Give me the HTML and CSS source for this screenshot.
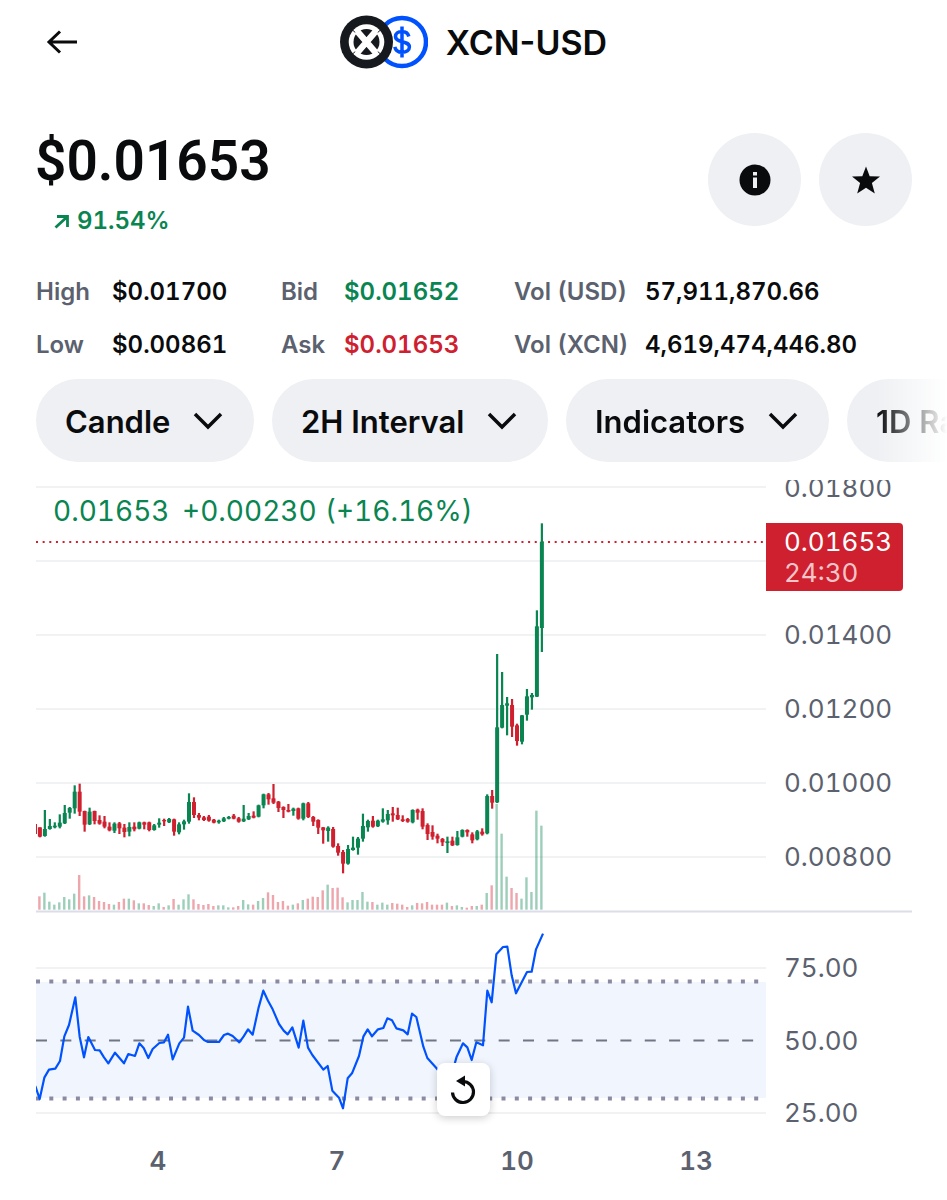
FILE: index.html
```html
<!DOCTYPE html>
<html lang="en">
<head>
  <meta charset="UTF-8" />
  <title>XCN-USD</title>
  <meta name="viewport" content="width=device-width, initial-scale=1" />
  <link rel="stylesheet" href="styles.css">
</head>
<body>
  <header class="top-bar">
    <button class="back-btn" aria-label="Back">
      <svg width="32" height="28" viewBox="0 0 32 28"><path d="M14 3.500L3 14l11 10.500M3 14h28" /></svg>
    </button>
    <div class="pair">
      <svg width="88" height="54" viewBox="0 0 88 54" aria-hidden="true">
        <circle cx="62" cy="27" r="24" fill="#fff" stroke="#0052ff" stroke-width="4.500" />
        <path d="M68.800 21.500c-.8-3.200-3.100-5-6.800-5-4 0-6.500 2-6.500 5 0 7 13.900 3.400 13.900 10.600 0 3.300-2.900 5.200-7.100 5.200s-6.900-2-7.500-5.400M62 11.500v31" fill="none" stroke="#0052ff" stroke-width="3.500" />
        <circle cx="26.500" cy="27" r="26.500" fill="#16191e" />
        <circle cx="26.500" cy="27" r="17.800" fill="#fff" />
        <circle cx="26.500" cy="27" r="13" fill="#16191e" />
        <path d="M12.500 15l5 4.500M40.500 15l-5 4.500M12.500 39l5-4.500M40.500 39l-5-4.500" stroke="#16191e" stroke-width="1" />
        <path d="M17 16l19 22M36 16l-19 22" stroke="#fff" stroke-width="6.500" />
      </svg>
      <h1>XCN-USD</h1>
    </div>
  </header>

  <section class="summary">
    <div>
      <div class="price">$0.01653</div>
      <div class="change">
        <svg width="16" height="16" viewBox="0 0 16 16" aria-hidden="true"><path d="M1.500 14.500L13 4M3 3.500h10.500V14" /></svg>
        91.54%
      </div>
    </div>
    <div class="actions">
      <button class="round-btn" aria-label="Info">
        <svg width="32" height="32" viewBox="0 0 32 32">
          <circle cx="16" cy="16" r="15.500" fill="#0a0b0d" />
          <path d="M14 8h4v3.500h-4zM14 13.500h4V24h-4z" fill="#eef0f3" />
        </svg>
      </button>
      <button class="round-btn" aria-label="Favorite">
        <svg width="30" height="30" viewBox="0 0 30 30"><path d="M15 1.500l3.700 9.700 10.300.4-8.100 6.500 2.900 10.400L15 22.700 6.200 28.500l2.900-10.400L1 11.600l10.300-.4z" fill="#0a0b0d" /></svg>
      </button>
    </div>
  </section>

  <dl class="stats">
    <dt>High</dt><dd>$0.01700</dd>
    <dt>Bid</dt><dd class="up">$0.01652</dd>
    <dt>Vol (USD)</dt><dd>57,911,870.66</dd>
    <dt>Low</dt><dd>$0.00861</dd>
    <dt>Ask</dt><dd class="down">$0.01653</dd>
    <dt>Vol (XCN)</dt><dd>4,619,474,446.80</dd>
  </dl>

  <div class="filters">
    <div class="pill">
      <select aria-label="Chart type"><option>Candle</option></select>
      <svg width="30" height="20" viewBox="0 0 30 20"><path d="M2 3l13 13L28 3" /></svg>
    </div>
    <div class="pill">
      <select aria-label="Interval"><option>2H Interval</option></select>
      <svg width="30" height="20" viewBox="0 0 30 20"><path d="M2 3l13 13L28 3" /></svg>
    </div>
    <div class="pill">
      <select aria-label="Indicators"><option>Indicators</option></select>
      <svg width="30" height="20" viewBox="0 0 30 20"><path d="M2 3l13 13L28 3" /></svg>
    </div>
    <div class="pill">
      <select aria-label="Range"><option>1D Range</option></select>
      <svg width="30" height="20" viewBox="0 0 30 20"><path d="M2 3l13 13L28 3" /></svg>
    </div>
  </div>

  <main class="chart">
    <svg class="plot" viewBox="0 0 911 720" role="img" aria-label="XCN-USD candles, volume and RSI">
      <rect class="band" x="0" y="502" width="730" height="116" />
      <g class="grid">
        <path d="M0 7h730M0 81h730M0 155h730M0 229h730M0 303h730M0 377h730M0 488h730M0 633h730" />
      </g>
      <path class="divider" d="M0 431.500h876" />

      <path class="limit" d="M0 501.500h730M0 618.500h730" />
      <path class="middle" d="M0 560.500h730" />

      <g id="volume"></g>
      <path class="last-price" d="M0 62h730" />
      <g id="candles"></g>
      <polyline id="rsi" />

      <g class="legend">
        <text x="17" y="41">0.01653</text>
        <text x="146" y="41">+0.00230</text>
        <text x="289" y="41">(+16.16%)</text>
      </g>

      <g class="axis">
        <text x="748" y="17">0.01800</text>
        <text x="748" y="164">0.01400</text>
        <text x="748" y="238">0.01200</text>
        <text x="748" y="312">0.01000</text>
        <text x="748" y="386">0.00800</text>
        <text x="748" y="497">75.00</text>
        <text x="748" y="570">50.00</text>
        <text x="748" y="642">25.00</text>
      </g>

      <path class="tag" d="M730 43h133a4 4 0 0 1 4 4v60a4 4 0 0 1-4 4H730z" />
      <text class="tag-price" x="748" y="71">0.01653</text>
      <text class="tag-time" x="748" y="102">24:30</text>

      <g class="days">
        <text x="122" y="690">4</text>
        <text x="301" y="690">7</text>
        <text x="481" y="690">10</text>
        <text x="660" y="690">13</text>
      </g>
    </svg>
    <button class="reset-btn" aria-label="Reset chart">
      <svg width="30" height="32" viewBox="0 0 30 32">
        <path d="M4.500 18.500A10.500 10.500 0 1 0 15 7.500h-3" fill="none" stroke="#0a0b0d" stroke-width="3.200" />
        <path d="M17 1.500v11L8 7z" fill="#0a0b0d" />
      </svg>
    </button>
  </main>

  <script src="chart.js"></script>
</body>
</html>
```
FILE: styles.css
```css
body {
  margin: 0;
  font-family: Inter, "Liberation Sans", sans-serif;
  background-color: #fff;
  color: #0a0b0d;
  overflow-x: hidden;
}

button {
  padding: 0;
  border: none;
  cursor: pointer;
}

svg {
  display: block;
}

.top-bar {
  display: grid;
  grid-template-columns: 1fr auto 1fr;
  align-items: center;
  height: 84px;
  padding: 0 46px;
}

.back-btn {
  justify-self: start;
  background: none;
}

.back-btn path {
  fill: none;
  stroke: #0a0b0d;
  stroke-width: 3;
}

.pair {
  display: flex;
  align-items: center;
  gap: 18px;
}

h1 {
  margin: 0;
  padding-top: 2px;
  font-size: 34px;
  line-height: 40px;
  font-weight: 600;
}

.summary {
  display: flex;
  justify-content: space-between;
  margin: 45px 35px 0;
}

.price {
  font-family: Roboto, "Liberation Sans", sans-serif;
  font-size: 55px;
  line-height: 64px;
  font-weight: 600;
}

.change {
  display: flex;
  align-items: center;
  gap: 7px;
  margin: 12px 0 0 19px;
  font-size: 24px;
  line-height: 32px;
  font-weight: 600;
  font-variant-numeric: tabular-nums;
  color: #098551;
}

.change path {
  fill: none;
  stroke: #098551;
  stroke-width: 2.8;
}

.actions {
  display: flex;
  gap: 18px;
  padding-top: 4px;
}

.round-btn {
  display: grid;
  place-items: center;
  width: 93px;
  height: 93px;
  border-radius: 50%;
  background-color: #eef0f3;
}

.stats {
  display: grid;
  grid-template-columns: 76px 169px 63px 170px 131px auto;
  row-gap: 21px;
  margin: 39px 0 0 36px;
  font-size: 24px;
  line-height: 32px;
  font-variant-numeric: tabular-nums;
  white-space: nowrap;
}

.stats dt {
  font-weight: 600;
  color: #5b616e;
}

.stats dd {
  margin: 0;
  font-weight: 600;
}

.stats .up {
  color: #098551;
}

.stats .down {
  color: #cf202f;
}

.filters {
  display: flex;
  gap: 18px;
  margin-top: 18px;
  padding-left: 36px;
  overflow: hidden;
  -webkit-mask-image: linear-gradient(to right, #000 calc(100% - 70px), transparent);
  mask-image: linear-gradient(to right, #000 calc(100% - 70px), transparent);
}

.pill {
  position: relative;
  flex: none;
}

.pill select {
  appearance: none;
  height: 83px;
  padding: 2px 83px 0 29px;
  border: none;
  border-radius: 42px;
  background-color: #eef0f3;
  color: #0a0b0d;
  font-family: inherit;
  font-size: 31px;
  font-weight: 600;
}

.pill svg {
  position: absolute;
  right: 31px;
  top: 32px;
  pointer-events: none;
}

.pill path {
  fill: none;
  stroke: #0a0b0d;
  stroke-width: 3.5;
}

.chart {
  position: relative;
  margin: 18px 0 0 36px;
}

.plot {
  width: 100%;
  height: auto;
  font-variant-numeric: tabular-nums;
}

.grid path {
  stroke: #f1f2f4;
  stroke-width: 2;
}

.divider {
  stroke: #dcdde8;
  stroke-width: 2;
}

.band {
  fill: #f1f6fe;
}

.limit {
  stroke: #8a8ba3;
  stroke-width: 4;
  stroke-dasharray: 4 9.3;
}

.middle {
  stroke: #717684;
  stroke-width: 2;
  stroke-dasharray: 11 13.35;
}

.last-price {
  stroke: #cf202f;
  stroke-width: 2;
  stroke-dasharray: 2 4.65;
}

#rsi {
  fill: none;
  stroke: #0052ff;
  stroke-width: 2.2;
  stroke-linejoin: round;
}

.up-bar {
  fill: #098551;
}

.down-bar {
  fill: #cf202f;
}

#volume rect {
  opacity: 0.4;
}

.legend {
  fill: #098551;
  font-size: 28px;
}

.axis,
.tag-price,
.tag-time {
  font-size: 26px;
}

.axis,
.days {
  fill: #5b616e;
}

.tag {
  fill: #cf202f;
}

.tag-price {
  fill: #fff;
}

.tag-time {
  fill: #f5c6c9;
}

.days {
  font-size: 26px;
  font-weight: 600;
  text-anchor: middle;
}

.reset-btn {
  position: absolute;
  left: 44%;
  top: 81%;
  display: grid;
  place-items: center;
  width: 53px;
  height: 53px;
  border-radius: 8px;
  background-color: #fff;
  box-shadow: 0 2px 8px rgba(0, 0, 0, 0.2);
}
```
FILE: chart.js
```js
const SVG_NS = "http://www.w3.org/2000/svg";
const STEP = 4.97;
const FIRST_X = 3.4;
const VOLUME_BASE = 419;

// high, body top, body bottom, low, volume top, direction
// three data units make one unit of the plot
const candles = [
  [172, 172, 200, 202, 379, "r"], [120, 177, 198, 200, 368, "g"], [147, 168, 177, 179, 395, "g"],
  [157, 167, 172, 175, 404, "g"], [133, 158, 170, 175, 397, "g"], [105, 129, 160, 162, 381, "g"],
  [111, 114, 128, 146, 388, "g"], [46, 65, 115, 131, 371, "g"], [41, 65, 125, 138, 315, "r"],
  [122, 123, 164, 185, 379, "r"], [113, 125, 163, 165, 376, "g"], [122, 123, 153, 163, 381, "r"],
  [136, 150, 161, 164, 393, "r"], [138, 155, 170, 175, 396, "r"], [157, 170, 181, 184, 402, "r"],
  [157, 161, 182, 189, 404, "g"], [156, 160, 175, 192, 396, "r"], [162, 173, 186, 202, 386, "r"],
  [157, 171, 185, 199, 386, "g"], [157, 170, 178, 184, 391, "r"], [155, 157, 176, 178, 400, "g"],
  [155, 157, 164, 178, 400, "r"], [155, 157, 180, 184, 405, "r"], [162, 166, 180, 182, 408, "g"],
  [145, 158, 164, 173, 400, "g"], [146, 150, 154, 168, 411, "r"], [144, 147, 157, 159, 406, "g"],
  [146, 148, 185, 197, 387, "r"], [157, 163, 187, 193, 404, "g"], [149, 154, 163, 179, 388, "g"],
  [70, 96, 155, 161, 373, "g"], [82, 96, 135, 144, 388, "r"], [129, 135, 143, 151, 402, "r"],
  [138, 142, 150, 153, 405, "r"], [135, 140, 152, 155, 402, "r"], [147, 149, 158, 160, 408, "r"],
  [149, 152, 157, 161, 406, "g"], [141, 145, 154, 156, 406, "g"], [138, 141, 146, 148, 412, "g"],
  [132, 137, 146, 148, 412, "r"], [141, 145, 155, 158, 408, "r"], [105, 146, 154, 156, 390, "g"],
  [129, 138, 148, 150, 403, "g"], [124, 137, 143, 145, 404, "r"], [104, 106, 140, 142, 393, "g"],
  [71, 73, 106, 115, 384, "g"], [69, 73, 88, 104, 367, "r"], [42, 85, 98, 102, 375, "r"],
  [93, 95, 114, 126, 396, "r"], [109, 111, 120, 144, 393, "r"], [102, 120, 125, 127, 407, "r"],
  [113, 116, 123, 137, 404, "g"], [113, 115, 146, 149, 400, "r"], [98, 100, 146, 151, 390, "g"],
  [96, 100, 141, 144, 386, "r"], [138, 141, 155, 168, 380, "r"], [148, 150, 173, 192, 381, "r"],
  [171, 172, 181, 221, 361, "r"], [169, 173, 183, 215, 344, "g"], [171, 177, 230, 233, 354, "r"],
  [220, 228, 248, 257, 353, "r"], [240, 246, 281, 310, 382, "r"], [225, 237, 281, 284, 397, "g"],
  [200, 233, 240, 242, 390, "g"], [201, 206, 233, 254, 390, "g"], [131, 168, 206, 215, 366, "g"],
  [149, 153, 172, 185, 395, "g"], [138, 152, 170, 173, 396, "r"], [149, 152, 169, 171, 404, "g"],
  [115, 148, 155, 158, 398, "g"], [120, 132, 151, 164, 404, "g"], [111, 130, 136, 155, 399, "r"],
  [113, 135, 148, 150, 401, "r"], [136, 148, 153, 156, 404, "r"], [144, 147, 155, 158, 411, "r"],
  [118, 120, 157, 160, 406, "g"], [116, 119, 128, 149, 399, "r"], [115, 123, 170, 178, 400, "r"],
  [160, 165, 192, 210, 396, "r"], [166, 186, 200, 209, 404, "r"], [191, 197, 206, 220, 404, "r"],
  [204, 207, 217, 228, 404, "r"], [200, 214, 219, 249, 398, "g"], [200, 212, 226, 228, 408, "r"],
  [183, 202, 225, 227, 406, "g"], [178, 180, 200, 202, 411, "g"], [178, 180, 187, 200, 413, "r"],
  [187, 193, 211, 220, 408, "r"], [180, 184, 208, 211, 408, "g"], [175, 185, 193, 197, 404, "r"],
  [73, 78, 190, 193, 369, "g"], [60, 78, 98, 116, 346, "r"], [-348, -128, 97, 99, 102, "g"],
  [-294, -195, -127, -125, 191, "g"], [-219, -200, -193, -104, 320, "g"], [-213, -195, -130, -99, 354, "r"],
  [-139, -134, -87, -73, 369, "r"], [-165, -164, -85, -77, 386, "g"], [-243, -221, -166, -148, 322, "g"],
  [-231, -225, -218, -181, 366, "g"], [-479, -431, -220, -219, 122, "g"], [-740, -685, -426, -354, 167, "g"]
];

const rsi = [
  [16, 498], [29, 537], [43, 473], [57, 449], [76, 446], [90, 423], [103, 349], [117, 315], [136, 232],
  [149, 350], [162, 412], [175, 351], [195, 390], [209, 391], [222, 412], [235, 430], [255, 398],
  [282, 430], [295, 402], [315, 408], [328, 370], [341, 384], [355, 414], [368, 387], [388, 369],
  [402, 367], [414, 344], [428, 418], [448, 370], [462, 353], [474, 260], [488, 332], [507, 345],
  [522, 360], [534, 366], [567, 366], [582, 345], [594, 341], [608, 348], [628, 367], [641, 349],
  [654, 328], [668, 344], [686, 262], [700, 212], [714, 242], [728, 268], [747, 312], [761, 332],
  [773, 343], [787, 322], [806, 383], [820, 302], [834, 383], [847, 405], [880, 449], [893, 438],
  [907, 512], [927, 533], [939, 565], [953, 475], [966, 460], [987, 408], [1000, 350], [1013, 328],
  [1026, 349], [1044, 328], [1060, 324], [1072, 295], [1086, 301], [1099, 325], [1120, 331],
  [1133, 343], [1146, 281], [1159, 291], [1180, 380], [1192, 414], [1219, 444], [1240, 470],
  [1258, 475], [1275, 428], [1280, 410], [1299, 370], [1312, 382], [1325, 420], [1339, 367],
  [1359, 376], [1372, 212], [1385, 247], [1399, 103], [1419, 81], [1432, 80], [1445, 166],
  [1458, 220], [1491, 156], [1505, 155], [1518, 88], [1539, 41]
];

function addBar(parent, x, width, top, bottom, dir) {
  const rect = document.createElementNS(SVG_NS, "rect");
  rect.setAttribute("x", x - width / 2);
  rect.setAttribute("y", 290 + top / 3);
  rect.setAttribute("width", width);
  rect.setAttribute("height", (bottom - top) / 3);
  rect.setAttribute("class", dir === "g" ? "up-bar" : "down-bar");
  parent.appendChild(rect);
}

const candleGroup = document.getElementById("candles");
const volumeGroup = document.getElementById("volume");

// the candle before the first one is cut off by the plot's edge
addBar(candleGroup, 0.5, 1, 162, 192, "r");

candles.forEach(([high, top, bottom, low, volume, dir], i) => {
  const x = FIRST_X + i * STEP;
  addBar(volumeGroup, x, 2.4, volume, VOLUME_BASE, dir);
  addBar(candleGroup, x + 0.5, 2.2, high, low, dir);
  addBar(candleGroup, x + 0.5, 4, top, bottom, dir);
});

document.getElementById("rsi").setAttribute(
  "points",
  rsi.map(([x, y]) => `${x / 3 - 6},${440 + y / 3}`).join(" ")
);
```
